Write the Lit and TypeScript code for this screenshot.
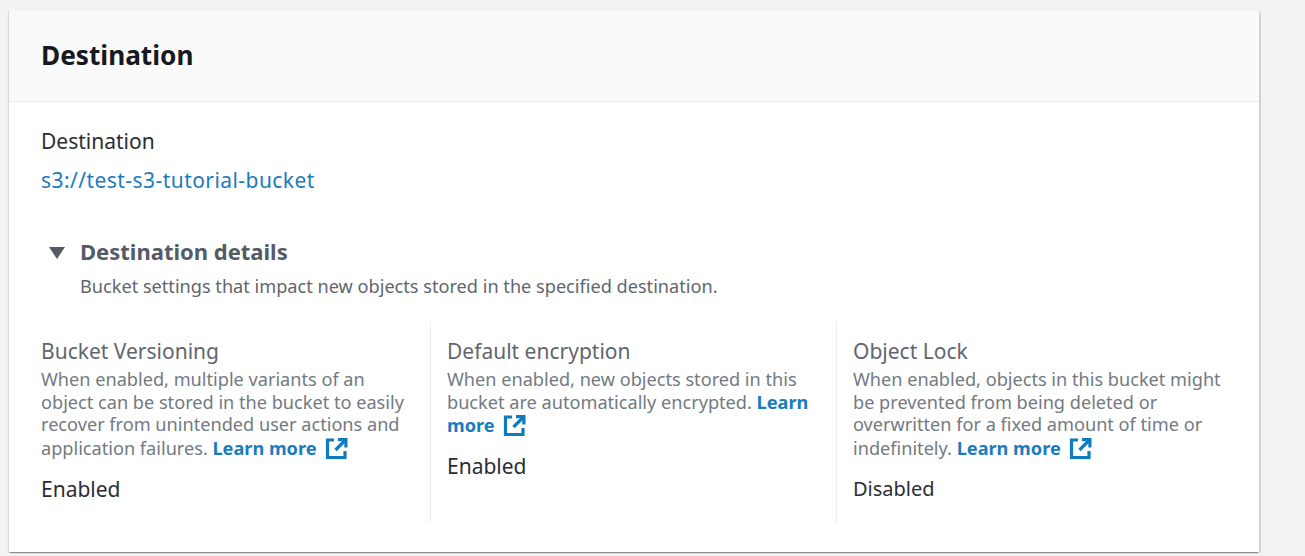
import { LitElement, html, css } from "lit";
import { customElement } from "lit/decorators.js";

const ext = html`<svg class="ext" viewBox="0 0 23 23" width="23" height="23" fill="none" stroke="#0f7cc0" stroke-width="3.2"><path d="M9 3H2.5v17.5H20V14" /><path d="M10.5 13L20 3.5" /><path d="M13 2.6H20.9V10.5" /></svg>`;

@customElement("app-root")
export class AppRoot extends LitElement {
  static styles = css`
    :host { display: block; width: 1305px; height: 556px; background: #f2f3f3; overflow: hidden;
      font-family: "Noto Sans", "Open Sans", sans-serif; padding: 10px 46px 0 9px; box-sizing: border-box; }
    .card { background: #fff; height: 542px; box-shadow: 0 2px 1px -1px rgba(40,44,46,.38), 1.5px 1px 1px 0 rgba(40,44,46,.16), -1px 1px 1px 0 rgba(40,44,46,.12); }
    .head { height: 92px; box-sizing: border-box; background: #fafafa; border-bottom: 1px solid #eaeded; padding: 26px 32px 0; font-size: 26.2px; line-height: 38px; font-weight: 700; color: #16191f; }
    .body { padding: 25px 32px 0; }
    .label { font-size: 21px; line-height: 29px; color: #2a2e33; height: 39px; }
    .link { font-size: 21px; line-height: 29px; letter-spacing: .44px; color: #1a7cbd; height: 29px; }
    .exp { margin: 41px 0 0 8px; display: grid; grid-template-columns: 31px 1fr; }
    .tri { width: 16px; height: 12px; margin-top: 11px; }
    .exp h3 { margin: 0; font-size: 22px; line-height: 30px; font-weight: 700; color: #545b64; }
    .exp p { margin: 8px 0 0; grid-column: 2; font-size: 18.15px; line-height: 24px; color: #5f666e; }
    .cols { display: grid; grid-template-columns: 389px 406px 391px; margin-top: 24px; height: 200px; }
    .col { padding: 15px 17px 0 16px; border-left: 1px solid #eaeded; }
    .col:first-child { border-left: 0; padding-left: 0; }
    .col:last-child { padding-right: 0; }
    .t { font-size: 21px; line-height: 29px; color: #5f666e; }
    .d { font-size: 18.15px; line-height: 22.5px; color: #727a82; margin-top: 2px; }
    .d a { color: #1a7cbd; font-weight: 700; white-space: nowrap; }
    .d a.wrap { white-space: normal; }
    .ext { vertical-align: -5px; margin: 1px 0 0 4px; }
    .v { font-size: 21px; line-height: 29px; color: #2a2e33; margin-top: 15px; }
    .v.dis { font-size: 20px; line-height: 27px; }
  `;

  render() {
    const learn = html`<a>Learn more ${ext}</a>`;
    return html`<div class="card">
      <div class="head">Destination</div>
      <div class="body">
        <div class="label">Destination</div>
        <div class="link">s3://test-s3-tutorial-bucket</div>
        <div class="exp">
          <svg class="tri" viewBox="0 0 16 12"><path d="M0 0H16L8 12Z" fill="#545b64"/></svg>
          <h3>Destination details</h3>
          <p>Bucket settings that impact new objects stored in the specified destination.</p>
        </div>
        <div class="cols">
          <div class="col"><div class="t">Bucket Versioning</div>
            <div class="d">When enabled, multiple variants of an object can be stored in the bucket to easily recover from unintended user actions and application failures. ${learn}</div>
            <div class="v">Enabled</div></div>
          <div class="col"><div class="t">Default encryption</div>
            <div class="d">When enabled, new objects stored in this bucket are automatically encrypted. <a class="wrap">Learn more ${ext}</a></div>
            <div class="v">Enabled</div></div>
          <div class="col"><div class="t">Object Lock</div>
            <div class="d">When enabled, objects in this bucket might be prevented from being deleted or overwritten for a fixed amount of time or indefinitely. ${learn}</div>
            <div class="v dis">Disabled</div></div>
        </div>
      </div>
    </div>`;
  }
}
